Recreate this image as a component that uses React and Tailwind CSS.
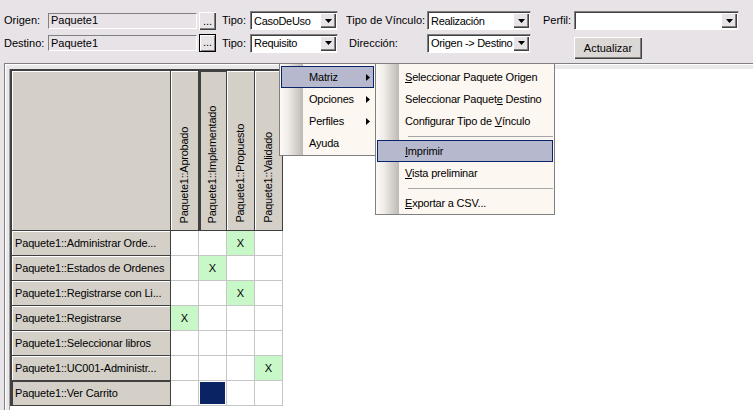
import React from "react";

const cols = ["Paquete1::Aprobado", "Paquete1::Implementado", "Paquete1::Propuesto", "Paquete1::Validado"];

// [label, column with an X (-1 = none)]
const rows = [
  ["Paquete1::Administrar Orde...", 2],
  ["Paquete1::Estados de Ordenes", 1],
  ["Paquete1::Registrarse con Li...", 2],
  ["Paquete1::Registrarse", 0],
  ["Paquete1::Seleccionar libros", -1],
  ["Paquete1::UC001-Administr...", 3],
  ["Paquete1::Ver Carrito", -1],
];

const Field = ({ text }) => (
  <div className="w-[149px] h-[16px] flex items-center pl-[2px] bg-[#e7e3e7] border border-t-[#808080] border-l-[#808080] border-b-white border-r-white">
    {text}
  </div>
);

const Dots = ({ focused }) => (
  <div
    className={
      "ml-[2px] w-[17px] h-[18px] flex items-end justify-center pb-[3px] bg-[#e7e3e7] " +
      (focused
        ? "border border-black shadow-[inset_1px_1px_0_#fff,inset_-1px_-1px_0_#808080]"
        : "shadow-[inset_1px_1px_0_#fff,inset_-1px_-1px_0_#404040,inset_-2px_-2px_0_#808080]")
    }
  >
    ...
  </div>
);

const Arrow = () => (
  <div className="w-[16px] h-full flex items-center justify-center bg-[#e7e3e7] shadow-[inset_1px_1px_0_#fff,inset_-1px_-1px_0_#404040,inset_-2px_-2px_0_#808080]">
    <svg width="7" height="4" viewBox="0 0 7 4">
      <polygon points="0,0 7,0 3.5,4" fill="#000" />
    </svg>
  </div>
);

const Select = ({ text, w }) => (
  <div className={w + " h-[19px] flex items-stretch bg-white border border-t-[#808080] border-l-[#808080] border-b-white border-r-[#e7e3e7] shadow-[inset_1px_1px_0_#404040]"}>
    <span className="flex-1 flex items-center pl-[3px] pt-[1px] whitespace-nowrap overflow-hidden tracking-[-0.3px]">{text}</span>
    <div className="pt-[1px] pb-[1px] pr-[1px]">
      <Arrow />
    </div>
  </div>
);

const TriRight = () => (
  <svg width="4" height="7" viewBox="0 0 4 7" className="ml-auto mr-[3px]">
    <polygon points="0,0 4,3.5 0,7" fill="#000" />
  </svg>
);

const Item = ({ children, active, sub }) => (
  <div
    className={
      "flex items-center h-[22px] pl-[27px] border tracking-[-0.2px] " +
      (active ? "border-[#0a246a] bg-[#b6b9cd]" : "border-transparent")
    }
  >
    <span>{children}</span>
    {sub && <TriRight />}
  </div>
);

const Sep = () => (
  <div className="h-[8px] flex items-center pl-[31px]">
    <div className="h-px flex-1 bg-[#a6a6a6]" />
  </div>
);

const menuBg =
  "bg-[linear-gradient(to_right,#fcfaf7_0px,#f0ece8_8px,#bdb9b4_23px,#fdf7f1_23px)]";

export default function App() {
  return (
    <div className="w-[753px] h-[410px] overflow-hidden relative flex flex-col bg-[#e7e3e7] text-[11px] leading-none text-black font-['Liberation_Sans',Arial,sans-serif]">
      {/* filtros */}
      <div className="h-[63px] shrink-0 pl-[4px] pt-[11px] flex flex-col gap-[3px]">
        <div className="flex items-center h-[19px]">
          <span className="w-[44px]">Origen:</span>
          <Field text="Paquete1" />
          <Dots />
          <span className="ml-[6px] w-[28px]">Tipo:</span>
          <Select w="w-[88px]" text="CasoDeUso" />
          <span className="ml-[8px] w-[81px]">Tipo de Vínculo:</span>
          <Select w="w-[104px]" text="Realización" />
          <span className="ml-[12px] w-[31px]">Perfil:</span>
          <Select w="w-[165px]" text="" />
        </div>
        <div className="flex items-center h-[20px]">
          <span className="w-[44px]">Destino:</span>
          <Field text="Paquete1" />
          <Dots focused />
          <span className="ml-[6px] w-[28px]">Tipo:</span>
          <Select w="w-[88px]" text="Requisito" />
          <span className="ml-[11px] w-[78px]">Dirección:</span>
          <Select w="w-[104px]" text="Origen -> Destino" />
          <button className="ml-[43px] self-start mt-[4px] w-[68px] h-[22px] bg-[#dbd7d5] shadow-[inset_1px_1px_0_#fff,inset_-1px_-1px_0_#404040,inset_-2px_-2px_0_#808080]">
            Actualizar
          </button>
        </div>
      </div>

      {/* matriz */}
      <div className="flex-1 flex pl-[4px]">
        <div className="flex-1 flex flex-col border-l border-t border-[#808080] bg-[#ebe8eb] pl-[4px] pt-[5px] shadow-[inset_1px_1px_0_#fff]">
          <div className="flex-1 bg-white border-l border-[#a0a0a0]">
            <div className="inline-grid grid-cols-[159px_repeat(4,28px)] grid-rows-[160px_repeat(7,25px)] border-l-2 border-t-2 border-[#404040]">
              <div className="bg-[#d4d0c8] border-r border-b border-[#404040] shadow-[inset_1px_1px_0_#fff]" />
              {cols.map((c, i) => (
                <div
                  key={c}
                  className={
                    "bg-[#d4d0c8] border-r border-b border-[#404040] flex flex-col items-center justify-end pb-[7px] " +
                    (i === 1 ? "shadow-[inset_2px_1px_0_#404040]" : "shadow-[inset_1px_1px_0_#fff]")
                  }
                >
                  <span className="[writing-mode:vertical-rl] rotate-180 leading-[13px] whitespace-nowrap tracking-[-0.25px]">{c}</span>
                </div>
              ))}
              {rows.map(([label, x], r) => (
                <React.Fragment key={label}>
                  <div
                    className={
                      "bg-[#d4d0c8] border-r border-b border-[#404040] flex items-center pl-[3px] whitespace-nowrap tracking-[-0.15px] " +
                      (r === 6 ? "shadow-[inset_1px_1px_0_#404040]" : "shadow-[inset_1px_1px_0_#fff]")
                    }
                  >
                    {label}
                  </div>
                  {cols.map((c, i) => (
                    <div
                      key={c}
                      className={
                        "border-r border-b border-[#c6c6c6] flex items-center justify-center " +
                        (i === x ? "bg-[#c8f8c8]" : "bg-white")
                      }
                    >
                      {i === x && "X"}
                      {r === 6 && i === 1 && <div className="w-[25px] h-[22px] bg-[#0a2463]" />}
                    </div>
                  ))}
                </React.Fragment>
              ))}
            </div>
          </div>
        </div>
      </div>

      {/* menú contextual */}
      <div className={"absolute left-[279px] top-[63px] w-[97px] border border-[#808080] px-[1px] pt-[2px] pb-[1px] " + menuBg}>
        <Item active sub>Matriz</Item>
        <Item sub>Opciones</Item>
        <Item sub>Perfiles</Item>
        <Item>Ayuda</Item>
      </div>
      <div className={"absolute left-[375px] top-[63px] w-[180px] border border-[#808080] px-[1px] pt-[2px] " + menuBg}>
        <Item><u>S</u>eleccionar Paquete Origen</Item>
        <Item>Seleccionar Paquet<u>e</u> Destino</Item>
        <Item>Configurar Tipo de <u>V</u>ínculo</Item>
        <Sep />
        <Item active><u>I</u>mprimir</Item>
        <Item><u>V</u>ista preliminar</Item>
        <Sep />
        <Item><u>E</u>xportar a CSV...</Item>
      </div>
    </div>
  );
}
